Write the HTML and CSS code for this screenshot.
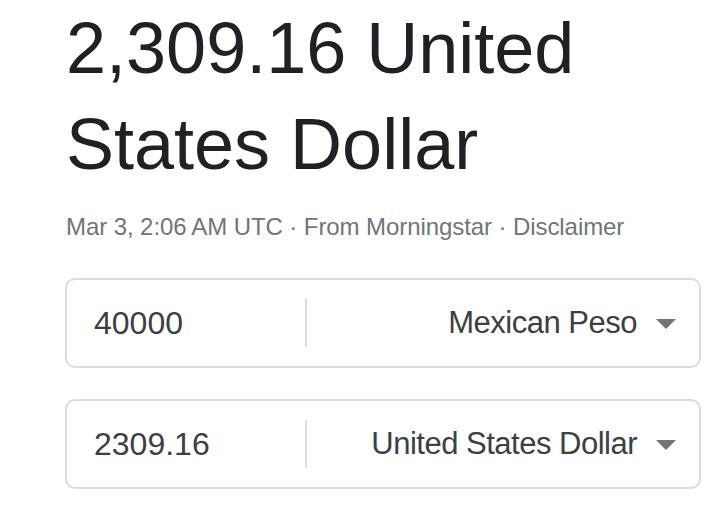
FILE: index.html
```html
<!DOCTYPE html>
<html>
<head>
<meta charset="utf-8">
<link rel="stylesheet" href="styles.css">
</head>
<body>
<div class="page">
  <div class="result">2,309.16 United States Dollar</div>
  <div class="meta">Mar 3, 2:06&#8239;AM UTC · From Morningstar · Disclaimer</div>
  <div class="converter">
    <div class="row">
      <div class="amount">40000</div>
      <div class="divider"></div>
      <div class="select">
        <span class="currency">Mexican Peso</span>
        <span class="arrow"></span>
      </div>
    </div>
    <div class="row">
      <div class="amount">2309.16</div>
      <div class="divider"></div>
      <div class="select">
        <span class="currency">United States Dollar</span>
        <span class="arrow"></span>
      </div>
    </div>
  </div>
</div>
</body>
</html>
```

FILE: styles.css
```css
html, body {
  margin: 0;
  padding: 0;
  background: #fff;
}
body {
  font-family: "Liberation Sans", Arial, sans-serif;
}
.page {
  padding: 0 20px 0 65px;
  width: 636px;
}
.result {
  font-size: 72px;
  line-height: 96px;
  color: #202124;
  padding-left: 1px;
  width: 560px;
}
.meta {
  margin-top: 17px;
  font-size: 24px;
  line-height: 36px;
  color: #70757a;
  padding-left: 1px;
  white-space: nowrap;
  letter-spacing: -0.08px;
}
.converter {
  margin-top: 33px;
  display: flex;
  flex-direction: column;
  gap: 31px;
}
.row {
  display: flex;
  align-items: center;
  height: 86px;
  border: 2px solid #dadce0;
  border-radius: 10px;
}
.amount {
  flex: 0 0 211px;
  padding-left: 27px;
  font-size: 32px;
  color: #3c4043;
}
.divider {
  width: 2px;
  height: 48px;
  background: #dadce0;
}
.select {
  flex: 1;
  display: flex;
  align-items: center;
  justify-content: flex-end;
  gap: 19px;
  padding-right: 23px;
  font-size: 31px;
  letter-spacing: -0.5px;
  color: #3c4043;
}
.arrow {
  width: 0;
  height: 0;
  border-left: 10px solid transparent;
  border-right: 10px solid transparent;
  border-top: 10px solid #70757a;
  margin-top: 2px;
}
```
